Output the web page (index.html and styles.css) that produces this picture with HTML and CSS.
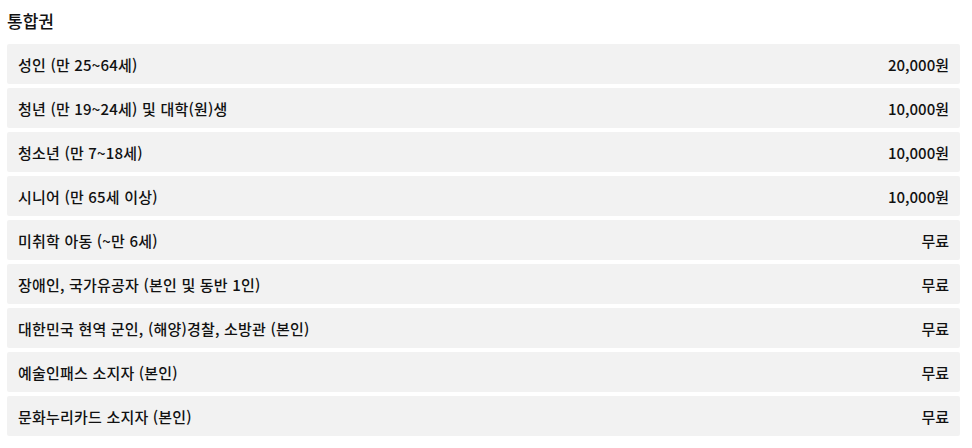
FILE: index.html
```html
<!DOCTYPE html>
<html lang="ko">
<head>
    <meta charset="UTF-8">
    <meta name="viewport" content="width=device-width, initial-scale=1.0">
    <title>통합권</title>
    <link rel="stylesheet" href="styles.css">
</head>
<body>
    <div class="price-section">
        <h2 class="section-title">통합권</h2>
        <ul class="price-list">
            <li class="price-row"><span>성인 (만 25~64세)</span><span class="price">20,000원</span></li>
            <li class="price-row"><span>청년 (만 19~24세) 및 대학(원)생</span><span class="price">10,000원</span></li>
            <li class="price-row"><span>청소년 (만 7~18세)</span><span class="price">10,000원</span></li>
            <li class="price-row"><span>시니어 (만 65세 이상)</span><span class="price">10,000원</span></li>
            <li class="price-row"><span>미취학 아동 (~만 6세)</span><span class="price">무료</span></li>
            <li class="price-row"><span>장애인, 국가유공자 (본인 및 동반 1인)</span><span class="price">무료</span></li>
            <li class="price-row"><span>대한민국 현역 군인, (해양)경찰, 소방관 (본인)</span><span class="price">무료</span></li>
            <li class="price-row"><span>예술인패스 소지자 (본인)</span><span class="price">무료</span></li>
            <li class="price-row"><span>문화누리카드 소지자 (본인)</span><span class="price">무료</span></li>
        </ul>
    </div>
</body>
</html>
```
FILE: styles.css
```css
body {
    font-family: "Noto Sans CJK KR", "Noto Sans", sans-serif;
    background-color: #fff;
    color: #111;
    margin: 0;
    padding: 0;
}
.price-section {
    width: 953px;
    padding: 9px 0 0 7px;
}
.section-title {
    font-size: 17px;
    font-weight: 500;
    line-height: 24px;
    margin: 0 0 11px 0;
}
.price-list {
    list-style: none;
    margin: 0;
    padding: 0;
    display: flex;
    flex-direction: column;
    gap: 4px;
}
.price-row {
    display: flex;
    justify-content: space-between;
    align-items: center;
    height: 40px;
    padding: 0 11px;
    background-color: #f2f2f2;
    border-radius: 2px;
    font-size: 15px;
    font-weight: 500;
    letter-spacing: 0.2px;
}
.price {
    letter-spacing: 0;
}
```
